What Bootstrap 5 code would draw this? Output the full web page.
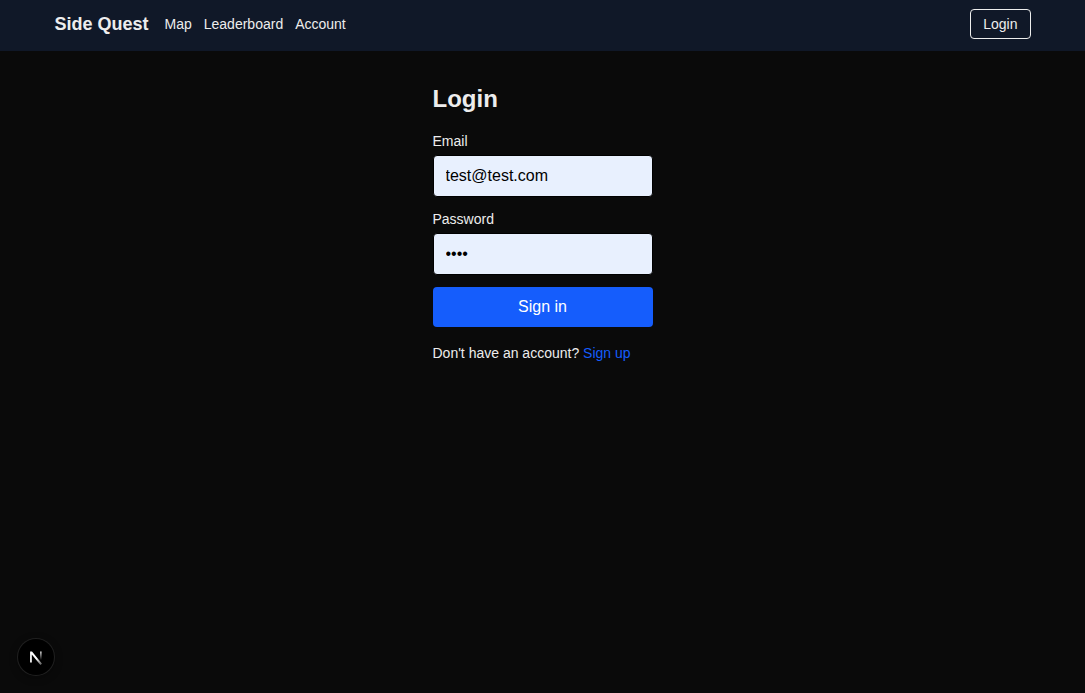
<!DOCTYPE html>
<html lang="en">
<head>
<meta charset="utf-8">
<meta name="viewport" content="width=device-width, initial-scale=1">
<title>Side Quest</title>
<link href="https://cdn.jsdelivr.net/npm/bootstrap@5.3.0/dist/css/bootstrap.min.css" rel="stylesheet">
<style>
body{background:#0a0a0a;color:#ededed;font-family:"Liberation Sans",Arial,sans-serif}
.topbar{background:#101828;padding:9px 0 12px}
.topbar-inner{max-width:1024px}
.topbar a{color:#ededed;text-decoration:none}
.topbar a:hover{color:#fff}
.brand{font-size:18px;line-height:28px;font-weight:700}
.text-14{font-size:14px;line-height:20px}
.links{gap:12px}
.topbar .btn-login{border:1px solid #ededed;border-radius:4px;padding:4px 12px}
.login-box{max-width:220px;padding-top:32px}
.login-title{font-size:24px;line-height:32px;font-weight:700}
.login-form{gap:12px}
.field,.field:focus{background:#e8f0fe;color:#000;border:1px solid #000}
.field{height:42px;border-radius:4px;padding:8px 12px;font-size:16px;line-height:24px}
.btn-sign{background:#155dfc;color:#fff;border:0;border-radius:4px;padding:8px 16px;line-height:24px}
.btn-sign:hover{background:#1447e6;color:#fff}
.signup{color:#155dfc;text-decoration:none}
.dev-badge{left:18px;bottom:18px;width:36px;height:36px;background:#000;box-shadow:0 0 0 1px #202020,0 2px 8px #0006}
</style>
<script src="https://cdn.jsdelivr.net/npm/bootstrap@5.3.0/dist/js/bootstrap.bundle.min.js" defer></script>
</head>
<body>
<nav class="topbar">
  <div class="topbar-inner mx-auto px-4 d-flex align-items-center justify-content-between">
    <div class="d-flex align-items-center gap-3">
      <a class="brand" href="#">Side Quest</a>
      <div class="links d-flex text-14">
        <a href="#">Map</a>
        <a href="#">Leaderboard</a>
        <a href="#">Account</a>
      </div>
    </div>
    <a class="btn-login text-14" href="#">Login</a>
  </div>
</nav>
<main class="login-box mx-auto">
  <h1 class="login-title mb-3">Login</h1>
  <form class="login-form d-flex flex-column mb-3">
    <div class="d-flex flex-column gap-1">
      <label class="text-14" for="email">Email</label>
      <input class="form-control field" id="email" type="email" value="test@test.com">
    </div>
    <div class="d-flex flex-column gap-1">
      <label class="text-14" for="password">Password</label>
      <input class="form-control field" id="password" type="password" value="test">
    </div>
    <button class="btn btn-sign" type="button">Sign in</button>
  </form>
  <p class="text-14 mb-0">Don't have an account? <a class="signup" href="#">Sign up</a></p>
</main>
<button class="dev-badge position-fixed rounded-circle border-0 p-0 d-flex align-items-center justify-content-center" type="button" aria-label="Open developer tools">
  <svg width="36" height="36" viewBox="0 0 36 36" fill="none" aria-hidden="true">
    <defs>
      <linearGradient id="diag" x1="19" y1="19" x2="24" y2="25" gradientUnits="userSpaceOnUse"><stop stop-color="#fff"/><stop offset="1" stop-color="#fff" stop-opacity=".35"/></linearGradient>
      <linearGradient id="stem" x1="23" y1="12" x2="23" y2="21" gradientUnits="userSpaceOnUse"><stop stop-color="#fff" stop-opacity=".85"/><stop offset="1" stop-color="#fff" stop-opacity="0"/></linearGradient>
    </defs>
    <path d="M12.1 12.6H14L24 24.8L22.4 26L13.8 15.4V23.6H12.1Z" fill="url(#diag)"/>
    <path d="M22 12.6H23.7V21H22Z" fill="url(#stem)"/>
  </svg>
</button>
</body>
</html>
